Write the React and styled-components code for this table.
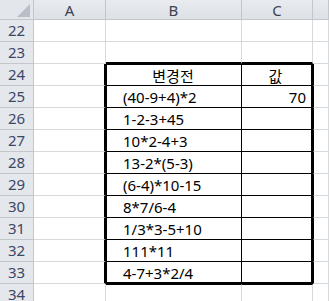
import React from "react";
import styled, { createGlobalStyle } from "styled-components";

const Global = createGlobalStyle`
  html, body { margin: 0; padding: 0; background: #fff; overflow: hidden; }
  body { font-family: "Noto Sans", "Noto Sans CJK KR", sans-serif; }
`;

const GRID = "#d8d9db";
const HEAD_LINE = "#c3c7cd";

const Sheet = styled.div`
  display: grid;
  grid-template-columns: 34px 72px 136px 71px 16px;
  grid-template-rows: 20px repeat(13, 22px);
  width: 329px;
  height: 301px;
  overflow: hidden;
`;

const Corner = styled.div`
  box-sizing: border-box;
  background: #e3e6ea;
  border-right: 1px solid ${HEAD_LINE};
  border-bottom: 1px solid ${HEAD_LINE};
  display: flex;
  align-items: flex-end;
  justify-content: flex-end;
  padding: 0 3px 2px 0;
`;

const ColHead = styled.div`
  box-sizing: border-box;
  background: linear-gradient(#e8ebef, #dde1e6);
  border-right: 1px solid ${HEAD_LINE};
  border-bottom: 1px solid ${HEAD_LINE};
  display: flex;
  align-items: center;
  justify-content: center;
  font-size: 15px;
  color: #3a4252;
  line-height: 1;
  padding-top: 1px;
`;

const RowHead = styled.div`
  box-sizing: border-box;
  background: #e4e7eb;
  border-right: 1px solid ${HEAD_LINE};
  border-bottom: 1px solid ${HEAD_LINE};
  display: flex;
  align-items: center;
  justify-content: center;
  font-size: 15px;
  color: #3b4766;
  line-height: 1;
`;

const line = (v) =>
  v === "thin"
    ? "1px solid #000"
    : v === "thick2"
    ? "2px solid #000"
    : v === "grid"
    ? `1px solid ${GRID}`
    : "none";

const Cell = styled.div`
  box-sizing: border-box;
  border-right: ${(p) => line(p.$r || "grid")};
  border-bottom: ${(p) => line(p.$b || "grid")};
  border-top: ${(p) => line(p.$t)};
  border-left: ${(p) => line(p.$l)};
  display: flex;
  align-items: center;
  justify-content: ${(p) =>
    p.$align === "right" ? "flex-end" : p.$align === "center" ? "center" : "flex-start"};
  padding: 1px 5px 0 ${(p) => (p.$indent ? "16px" : "3px")};
  font-size: 15px;
  font-family: ${(p) =>
    p.$korean ? '"Noto Sans CJK KR", sans-serif' : '"Noto Sans", "Noto Sans CJK KR", sans-serif'};
  color: #000;
  white-space: nowrap;
  line-height: 18px;
`;

const rows = [
  { n: 22 },
  { n: 23 },
  { n: 24, b: "변경전", c: "값", head: true },
  { n: 25, b: "(40-9+4)*2", c: "70" },
  { n: 26, b: "1-2-3+45" },
  { n: 27, b: "10*2-4+3" },
  { n: 28, b: "13-2*(5-3)" },
  { n: 29, b: "(6-4)*10-15" },
  { n: 30, b: "8*7/6-4" },
  { n: 31, b: "1/3*3-5+10" },
  { n: 32, b: "111*11" },
  { n: 33, b: "4-7+3*2/4" },
  { n: 34 },
];

function CornerMark() {
  return (
    <svg width="13" height="13" viewBox="0 0 13 13">
      <polygon points="13,0 13,13 0,13" fill="#b9bec6" />
    </svg>
  );
}

export default function App() {
  return (
    <>
      <Global />
      <Sheet>
        <Corner>
          <CornerMark />
        </Corner>
        <ColHead>A</ColHead>
        <ColHead>B</ColHead>
        <ColHead>C</ColHead>
        <ColHead />
        {rows.map((r) => {
          const inTable = r.n >= 24 && r.n <= 33;
          const above = r.n === 23;
          const last = r.n === 33;
          const below = r.n === 34;
          const tableB = inTable ? (last ? "thick2" : "thin") : above ? "thick2" : "grid";
          return (
            <React.Fragment key={r.n}>
              <RowHead>{r.n}</RowHead>
              <Cell $r={inTable ? "thick2" : "grid"} />
              <Cell
                $l={inTable ? "thin" : undefined}
                $t={r.n === 24 || below ? "thin" : undefined}
                $r={inTable ? "thin" : "grid"}
                $b={tableB}
                $align={r.head ? "center" : "left"}
                $indent={!r.head}
                $korean={r.head}
              >
                {r.b}
              </Cell>
              <Cell
                $t={r.n === 24 || below ? "thin" : undefined}
                $r={inTable ? "thick2" : "grid"}
                $b={tableB}
                $align={r.head ? "center" : "right"}
                $korean={r.head}
              >
                {r.c}
              </Cell>
              <Cell $l={inTable ? "thin" : undefined} />
            </React.Fragment>
          );
        })}
      </Sheet>
    </>
  );
}
